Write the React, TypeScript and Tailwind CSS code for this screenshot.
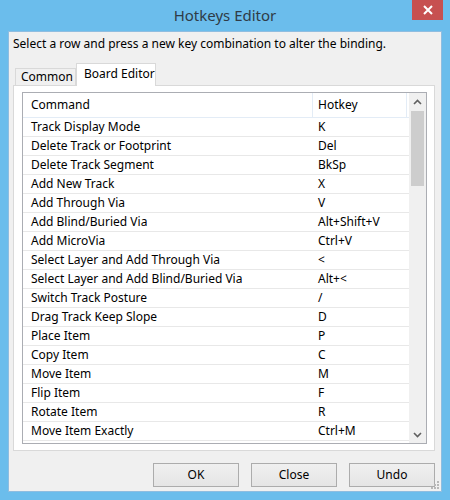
import React from 'react';

const rows: [string, string][] = [
    ['Track Display Mode', 'K'],
    ['Delete Track or Footprint', 'Del'],
    ['Delete Track Segment', 'BkSp'],
    ['Add New Track', 'X'],
    ['Add Through Via', 'V'],
    ['Add Blind/Buried Via', 'Alt+Shift+V'],
    ['Add MicroVia', 'Ctrl+V'],
    ['Select Layer and Add Through Via', '<'],
    ['Select Layer and Add Blind/Buried Via', 'Alt+<'],
    ['Switch Track Posture', '/'],
    ['Drag Track Keep Slope', 'D'],
    ['Place Item', 'P'],
    ['Copy Item', 'C'],
    ['Move Item', 'M'],
    ['Flip Item', 'F'],
    ['Rotate Item', 'R'],
    ['Move Item Exactly', 'Ctrl+M'],
];

const font = { fontFamily: '"Segoe UI", "Noto Sans", sans-serif' };

const Chevron = ({ down }: { down?: boolean }) => (
    <svg width="9" height="6" viewBox="0 0 9 6" className={down ? 'rotate-180' : ''}>
        <path d="M1 5 L4.5 1.5 L8 5" fill="none" stroke="#606060" strokeWidth="1.6" />
    </svg>
);

const DialogButton = ({ label }: { label: string }) => (
    <button className="w-[86px] h-[24px] border border-[#acacac] bg-gradient-to-b from-[#f0f0f0] to-[#e5e5e5] text-[12px] text-black">
        {label}
    </button>
);

export default function App() {
    return (
        <div className="w-[450px] h-[500px] bg-[#6bbdec] flex flex-col text-black" style={font}>
            {/* Title bar */}
            <div className="relative h-[31px] shrink-0 flex items-center justify-center">
                <span className="text-[15px] text-[#2f3b46] -mt-[1px]">Hotkeys Editor</span>
                <div className="absolute right-[7px] top-0 w-[31px] h-[20px] bg-[#c75050] flex items-center justify-center">
                    <svg width="10" height="10" viewBox="0 0 10 10">
                        <path d="M1 1 L9 9 M9 1 L1 9" stroke="white" strokeWidth="2" />
                    </svg>
                </div>
            </div>

            {/* Client area */}
            <div className="relative flex-1 mx-[8px] mb-[8px] bg-[#f0f0f0] border border-[#8fbde0] flex flex-col">
                <div className="pl-[4px] pt-[4px] h-[30px] text-[12px] leading-[16px]">
                    Select a row and press a new key combination to alter the binding.
                </div>

                {/* Tabs */}
                <div className="pl-[4px] flex flex-col">
                    <div className="flex items-end h-[23px] pl-[2px] text-[12px]">
                        <div className="w-[61px] h-[17px] border border-b-0 border-[#d9d9d9] bg-[#f0f0f0] pl-[5px] leading-[15px]">
                            Common
                        </div>
                        <div className="relative z-10 w-[80px] h-[23px] -mb-px border border-b-0 border-[#d9d9d9] bg-white pl-[7px] pt-[2px] leading-[16px]">
                            Board Editor
                        </div>
                    </div>

                    {/* Tab panel */}
                    <div className="w-[422px] h-[366px] border border-[#d9d9d9] bg-white pl-[8px] pr-[7px] pt-[6px] pb-[6px] flex">
                        {/* List box */}
                        <div className="flex-1 border border-[#abadb3] flex text-[12px]">
                            <div className="flex-1 flex flex-col overflow-hidden">
                                <div className="h-[25px] shrink-0 flex border-b border-[#e3ecf6]">
                                    <div className="w-[290px] pl-[8px] flex items-center border-r border-[#e3ecf6]">Command</div>
                                    <div className="w-[94px] pl-[5px] flex items-center border-r border-[#e3ecf6]">Hotkey</div>
                                </div>
                                {rows.map(([cmd, key]) => (
                                    <div key={cmd} className="h-[19px] shrink-0 flex border-b border-[#e8e8e8]">
                                        <div className="w-[290px] pl-[8px] flex items-center">{cmd}</div>
                                        <div className="pl-[5px] flex items-center">{key}</div>
                                    </div>
                                ))}
                            </div>

                            {/* Scrollbar */}
                            <div className="w-[17px] shrink-0 bg-[#f0f0f0] flex flex-col">
                                <div className="h-[17px] flex items-center justify-center">
                                    <Chevron />
                                </div>
                                <div className="flex-1 px-[2px] pt-px">
                                    <div className="h-[75px] bg-[#cdcdcd]" />
                                </div>
                                <div className="h-[17px] flex items-center justify-center">
                                    <Chevron down />
                                </div>
                            </div>
                        </div>
                    </div>
                </div>

                {/* Buttons */}
                <div className="flex justify-end gap-[12px] pr-[6px] pt-[12px]">
                    <DialogButton label="OK" />
                    <DialogButton label="Close" />
                    <DialogButton label="Undo" />
                </div>

                {/* Resize grip */}
                <svg className="absolute right-[1px] bottom-[1px]" width="10" height="10" viewBox="0 0 10 10">
                    <rect x="7" y="1" width="2" height="2" fill="#b8b8b8" />
                    <rect x="4" y="4" width="2" height="2" fill="#b8b8b8" />
                    <rect x="7" y="4" width="2" height="2" fill="#b8b8b8" />
                    <rect x="1" y="7" width="2" height="2" fill="#b8b8b8" />
                    <rect x="4" y="7" width="2" height="2" fill="#b8b8b8" />
                    <rect x="7" y="7" width="2" height="2" fill="#b8b8b8" />
                </svg>
            </div>
        </div>
    );
}
